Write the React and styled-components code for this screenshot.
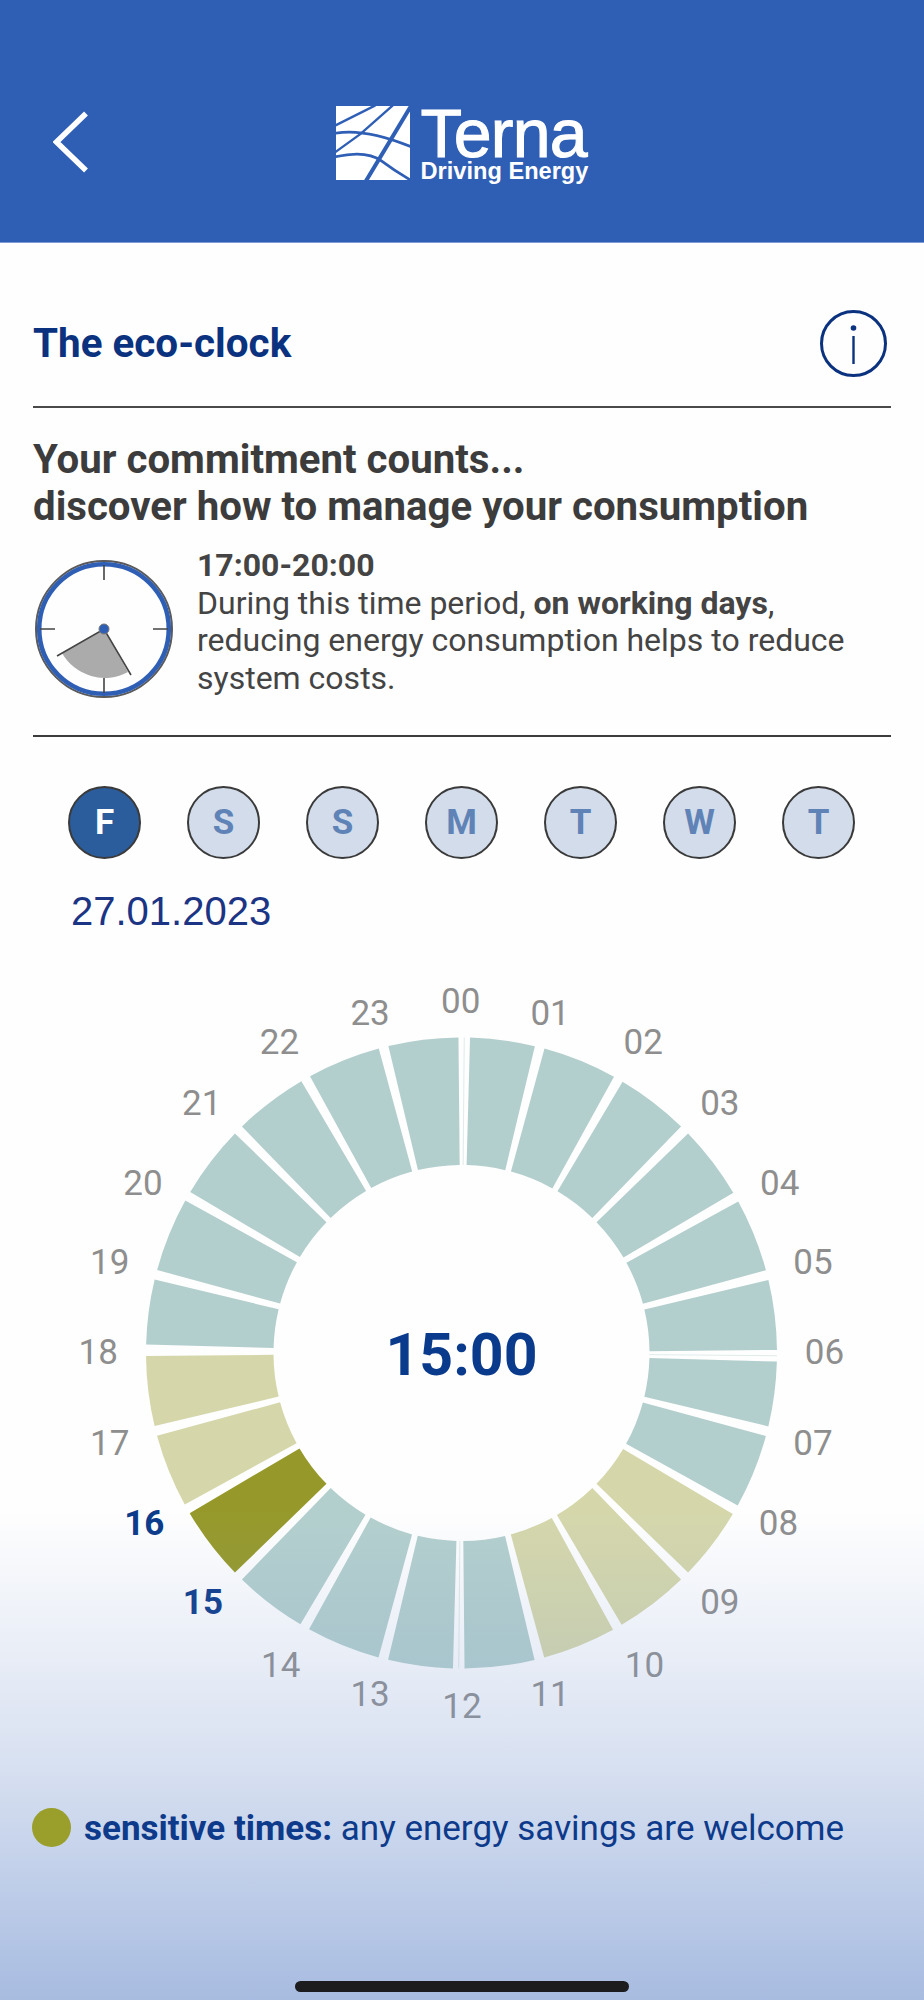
import React from 'react';
import styled, { createGlobalStyle } from 'styled-components';

const Global = createGlobalStyle`
  html, body { margin: 0; padding: 0; background: #fff; }
  * { box-sizing: border-box; }
`;

const Page = styled.div`
  position: relative;
  width: 924px;
  height: 2000px;
  overflow: hidden;
  background: #fefefe;
  font-family: Roboto, "Liberation Sans", sans-serif;
`;

const Header = styled.header`
  display: grid;
  grid-template-columns: 1fr auto 1fr;
  align-items: center;
  height: 243px;
  padding: 46px 53px 0;
  background: #2f5eb5;
  border-bottom: 1px solid #7d9bd6;
`;

const BackIcon = styled.svg`
  display: block;
  width: 36px;
  height: 62px;
  margin-bottom: 4px;
`;

const Logo = styled.div`
  display: flex;
  align-items: flex-start;
  gap: 11px;
  color: #fff;
`;

const LogoMark = styled.svg`
  display: block;
  width: 74px;
  height: 74px;
  flex: none;
`;

const LogoText = styled.div`
  display: flex;
  flex-direction: column;
  font-family: "Liberation Sans", sans-serif;
`;

const Brand = styled.div`
  font-size: 68px;
  line-height: 54px;
  height: 54px;
  letter-spacing: -0.8px;
  -webkit-text-stroke: 1.1px #fff;
`;

const Tagline = styled.div`
  font-size: 23.6px;
  line-height: 22px;
  font-weight: 700;
  white-space: nowrap;
`;

const Section = styled.section`
  padding: 0 33px;
`;

const TitleRow = styled.div`
  display: flex;
  align-items: center;
  justify-content: space-between;
  padding: 67px 4px 29px 0;
  border-bottom: 2px solid #4a4a4a;
`;

const Title = styled.h1`
  margin: 0;
  font-size: 40.4px;
  line-height: 67px;
  font-weight: 700;
  color: #0b327f;
`;

const InfoIcon = styled.svg`
  display: block;
  width: 67px;
  height: 67px;
`;

const Heading = styled.h2`
  margin: 28px 0 0;
  font-size: 40.2px;
  line-height: 47px;
  font-weight: 700;
  color: #3c3c3c;
  white-space: nowrap;
`;

const PeriodRow = styled.div`
  display: flex;
  align-items: flex-start;
  gap: 23px;
  margin-top: 17px;
  padding-bottom: 35px;
  padding-left: 1px;
  border-bottom: 2px solid #3c3c3c;
`;

const ClockIcon = styled.svg`
  display: block;
  width: 140px;
  height: 140px;
  margin-top: 13px;
  flex: none;
`;

const PeriodText = styled.div`
  font-size: 32px;
  line-height: 37.7px;
  color: #444;
  white-space: nowrap;
  strong { font-weight: 700; }
`;

const PeriodTime = styled.div`
  font-weight: 700;
`;

const Days = styled.div`
  display: flex;
  justify-content: space-between;
  margin-top: 49px;
  padding: 0 36px 0 35px;
`;

const Day = styled.div`
  display: flex;
  align-items: center;
  justify-content: center;
  width: 73px;
  height: 73px;
  border-radius: 50%;
  border: 2px solid #3a3a3a;
  font-size: 35px;
  font-weight: 700;
  background: ${(p) => (p.$active ? '#2b5c9b' : '#d2dcea')};
  color: ${(p) => (p.$active ? '#fff' : '#5f83b6')};
`;

const DateText = styled.div`
  margin: 29px 0 0 38px;
  font-family: "Liberation Sans", sans-serif;
  font-size: 40px;
  line-height: 46px;
  color: #1c3484;
`;

const Chart = styled.svg`
  display: block;
  width: 924px;
  height: 800px;
  margin-top: 26px;
`;

const HourLabel = styled.text`
  font-family: Roboto, sans-serif;
  font-size: 35px;
  text-anchor: middle;
  dominant-baseline: central;
  font-weight: ${(p) => (p.$active ? 700 : 400)};
  fill: ${(p) => (p.$active ? '#0b3a8a' : '#8e8e8e')};
`;

const CenterTime = styled.text`
  font-family: Roboto, sans-serif;
  font-size: 59px;
  font-weight: 700;
  text-anchor: middle;
  dominant-baseline: central;
  fill: #0a3a8b;
`;

const Fade = styled.div`
  position: absolute;
  left: 0;
  right: 0;
  top: 1510px;
  bottom: 0;
  pointer-events: none;
  background: linear-gradient(
    to bottom,
    rgba(125, 155, 210, 0),
    rgba(125, 155, 210, 0.29) 51%,
    rgba(125, 155, 210, 0.67)
  );
`;

const Legend = styled.div`
  position: relative;
  z-index: 1;
  display: flex;
  align-items: flex-start;
  gap: 13px;
  margin-top: 48px;
  padding-left: 32px;
  font-size: 35px;
  color: #0d3a8a;
  strong { font-weight: 700; }
`;

const LegendDot = styled.span`
  display: block;
  width: 39px;
  height: 39px;
  border-radius: 50%;
  background: #9a9f2b;
  flex: none;
`;

const LegendText = styled.div`
  line-height: 39px;
  padding-top: 1px;
  white-space: nowrap;
`;

const HomeBar = styled.div`
  position: absolute;
  left: 295px;
  top: 1981px;
  width: 334px;
  height: 11px;
  border-radius: 6px;
  background: #1c1c1e;
  z-index: 2;
`;

const CX = 461.5;
const CY = 1353;
const ROUT = 315.5;
const RIN = 188;

// the dial's gaps are not evenly spaced: offset of each gap from its 15-degree mark, per quadrant
const QUADRANT_OFFSETS = [0.5, -0.65, -0.2, 0, 0.4, 0.7];
const boundary = (b) => b * 15 + QUADRANT_OFFSETS[b % 6];

const pt = (r, deg) => {
  const a = (deg * Math.PI) / 180;
  return [CX + r * Math.sin(a), CY - r * Math.cos(a)];
};

const sector = (a0, a1) => {
  const [x0, y0] = pt(ROUT, a0);
  const [x1, y1] = pt(ROUT, a1);
  const [x2, y2] = pt(RIN, a1);
  const [x3, y3] = pt(RIN, a0);
  return `M${x0} ${y0}A${ROUT} ${ROUT} 0 0 1 ${x1} ${y1}L${x2} ${y2}A${RIN} ${RIN} 0 0 0 ${x3} ${y3}Z`;
};

const colorOf = (i) => {
  if (i === 15) return '#96992a';
  if ((i >= 8 && i <= 10) || i === 16 || i === 17) return '#d5d7ab';
  return '#b3cfcd';
};

const gapFor = (b) => (b % 6 === 0 ? 1.05 : 0.9);

const hours = Array.from({ length: 24 }, (_, i) => i);
const days = ['F', 'S', 'S', 'M', 'T', 'W', 'T'];

// label centres, read from the dial (724-wide coordinates scaled by S)
const S = 924 / 724;
const labelPos = [
  [361, 785], [431, 794], [504, 817], [564, 865], [611, 927], [637, 989],
  [646, 1060], [637, 1131], [610, 1194], [564, 1256], [505, 1305], [431, 1328],
  [362, 1337], [290, 1328], [220, 1305], [159, 1256], [113, 1194], [86, 1131],
  [77, 1060], [86, 989], [112, 927], [158, 865], [219, 817], [290, 794],
];

export default function App() {
  return (
    <Page>
      <Global />
      <Header>
        <BackIcon viewBox="0 0 36 62" fill="none" stroke="#fff" strokeWidth="5.5">
          <path d="M33 2.5 L3.5 31 L33 59.5" strokeLinejoin="miter" />
        </BackIcon>
        <Logo>
          <LogoMark viewBox="15 15 220 220">
            <rect x="15" y="15" width="220" height="220" fill="#fff" />
            <g fill="none" stroke="#2f5eb5">
              <path d="M132 13 L13 73" strokeWidth="7" />
              <path d="M184 13 L88 98 L13 152" strokeWidth="7" />
              <path d="M238 15 L104 238" strokeWidth="12" />
              <path d="M13 96 Q100 80 238 136" strokeWidth="8" />
              <path d="M13 166 Q105 145 150 178 Q190 208 238 236" strokeWidth="8" />
            </g>
          </LogoMark>
          <LogoText>
            <Brand>Terna</Brand>
            <Tagline>Driving Energy</Tagline>
          </LogoText>
        </Logo>
        <span />
      </Header>

      <Section>
        <TitleRow>
          <Title>The eco-clock</Title>
          <InfoIcon viewBox="0 0 67 67" fill="none" stroke="#0b327f">
            <circle cx="33.5" cy="33.5" r="32" strokeWidth="3" />
            <circle cx="33.5" cy="18" r="2.8" fill="#0b327f" stroke="none" />
            <path d="M33.5 26 V54" strokeWidth="2.4" />
          </InfoIcon>
        </TitleRow>
        <Heading>
          Your commitment counts...
          <br />
          discover how to manage your consumption
        </Heading>
        <PeriodRow>
          <ClockIcon viewBox="0 0 140 140" fill="none">
            <circle cx="70" cy="69" r="68" stroke="#5a5a5a" strokeWidth="2" />
            <circle cx="70" cy="69" r="64.8" stroke="#2f5eb5" strokeWidth="4.6" />
            <path d="M28 93 L70 69 L94 112 A49 49 0 0 1 28 93 Z" fill="#ababab" />
            <g stroke="#444" strokeWidth="1.6">
              <path d="M70 5 V20 M70 118 V133 M6 69 H21 M119 69 H134" />
              <path d="M23 96 L70 69 L97 115" />
            </g>
            <circle cx="70" cy="69" r="5" fill="#2f5eb5" stroke="#777" strokeWidth="1" />
          </ClockIcon>
          <PeriodText>
            <PeriodTime>17:00-20:00</PeriodTime>
            During this time period, <strong>on working days</strong>,
            <br />
            reducing energy consumption helps to reduce
            <br />
            system costs.
          </PeriodText>
        </PeriodRow>
        <Days>
          {days.map((d, i) => (
            <Day key={i} $active={i === 0}>
              {d}
            </Day>
          ))}
        </Days>
        <DateText>27.01.2023</DateText>
      </Section>

      <Chart viewBox="0 960 924 800">
        {[0, 90, 180].map((deg) => {
          const [x0, y0] = pt(RIN, deg + 0.5);
          const [x1, y1] = pt(ROUT, deg + 0.5);
          return <line key={deg} x1={x0} y1={y0} x2={x1} y2={y1} stroke="#dfecea" strokeWidth="1" />;
        })}
        {hours.map((i) => {
          const a0 = boundary(i) + gapFor(i);
          const a1 = boundary(i + 1) - gapFor(i + 1);
          return <path key={i} d={sector(a0, a1)} fill={colorOf(i)} />;
        })}
        {labelPos.map(([x, y], i) => (
          <HourLabel key={i} x={x * S} y={y * S} $active={i === 15 || i === 16}>
            {String(i).padStart(2, '0')}
          </HourLabel>
        ))}
        <CenterTime x={CX} y={CY + 1}>
          15:00
        </CenterTime>
      </Chart>

      <Fade />

      <Legend>
        <LegendDot />
        <LegendText>
          <strong>sensitive times:</strong> any energy savings are welcome
        </LegendText>
      </Legend>
      <HomeBar />
    </Page>
  );
}
